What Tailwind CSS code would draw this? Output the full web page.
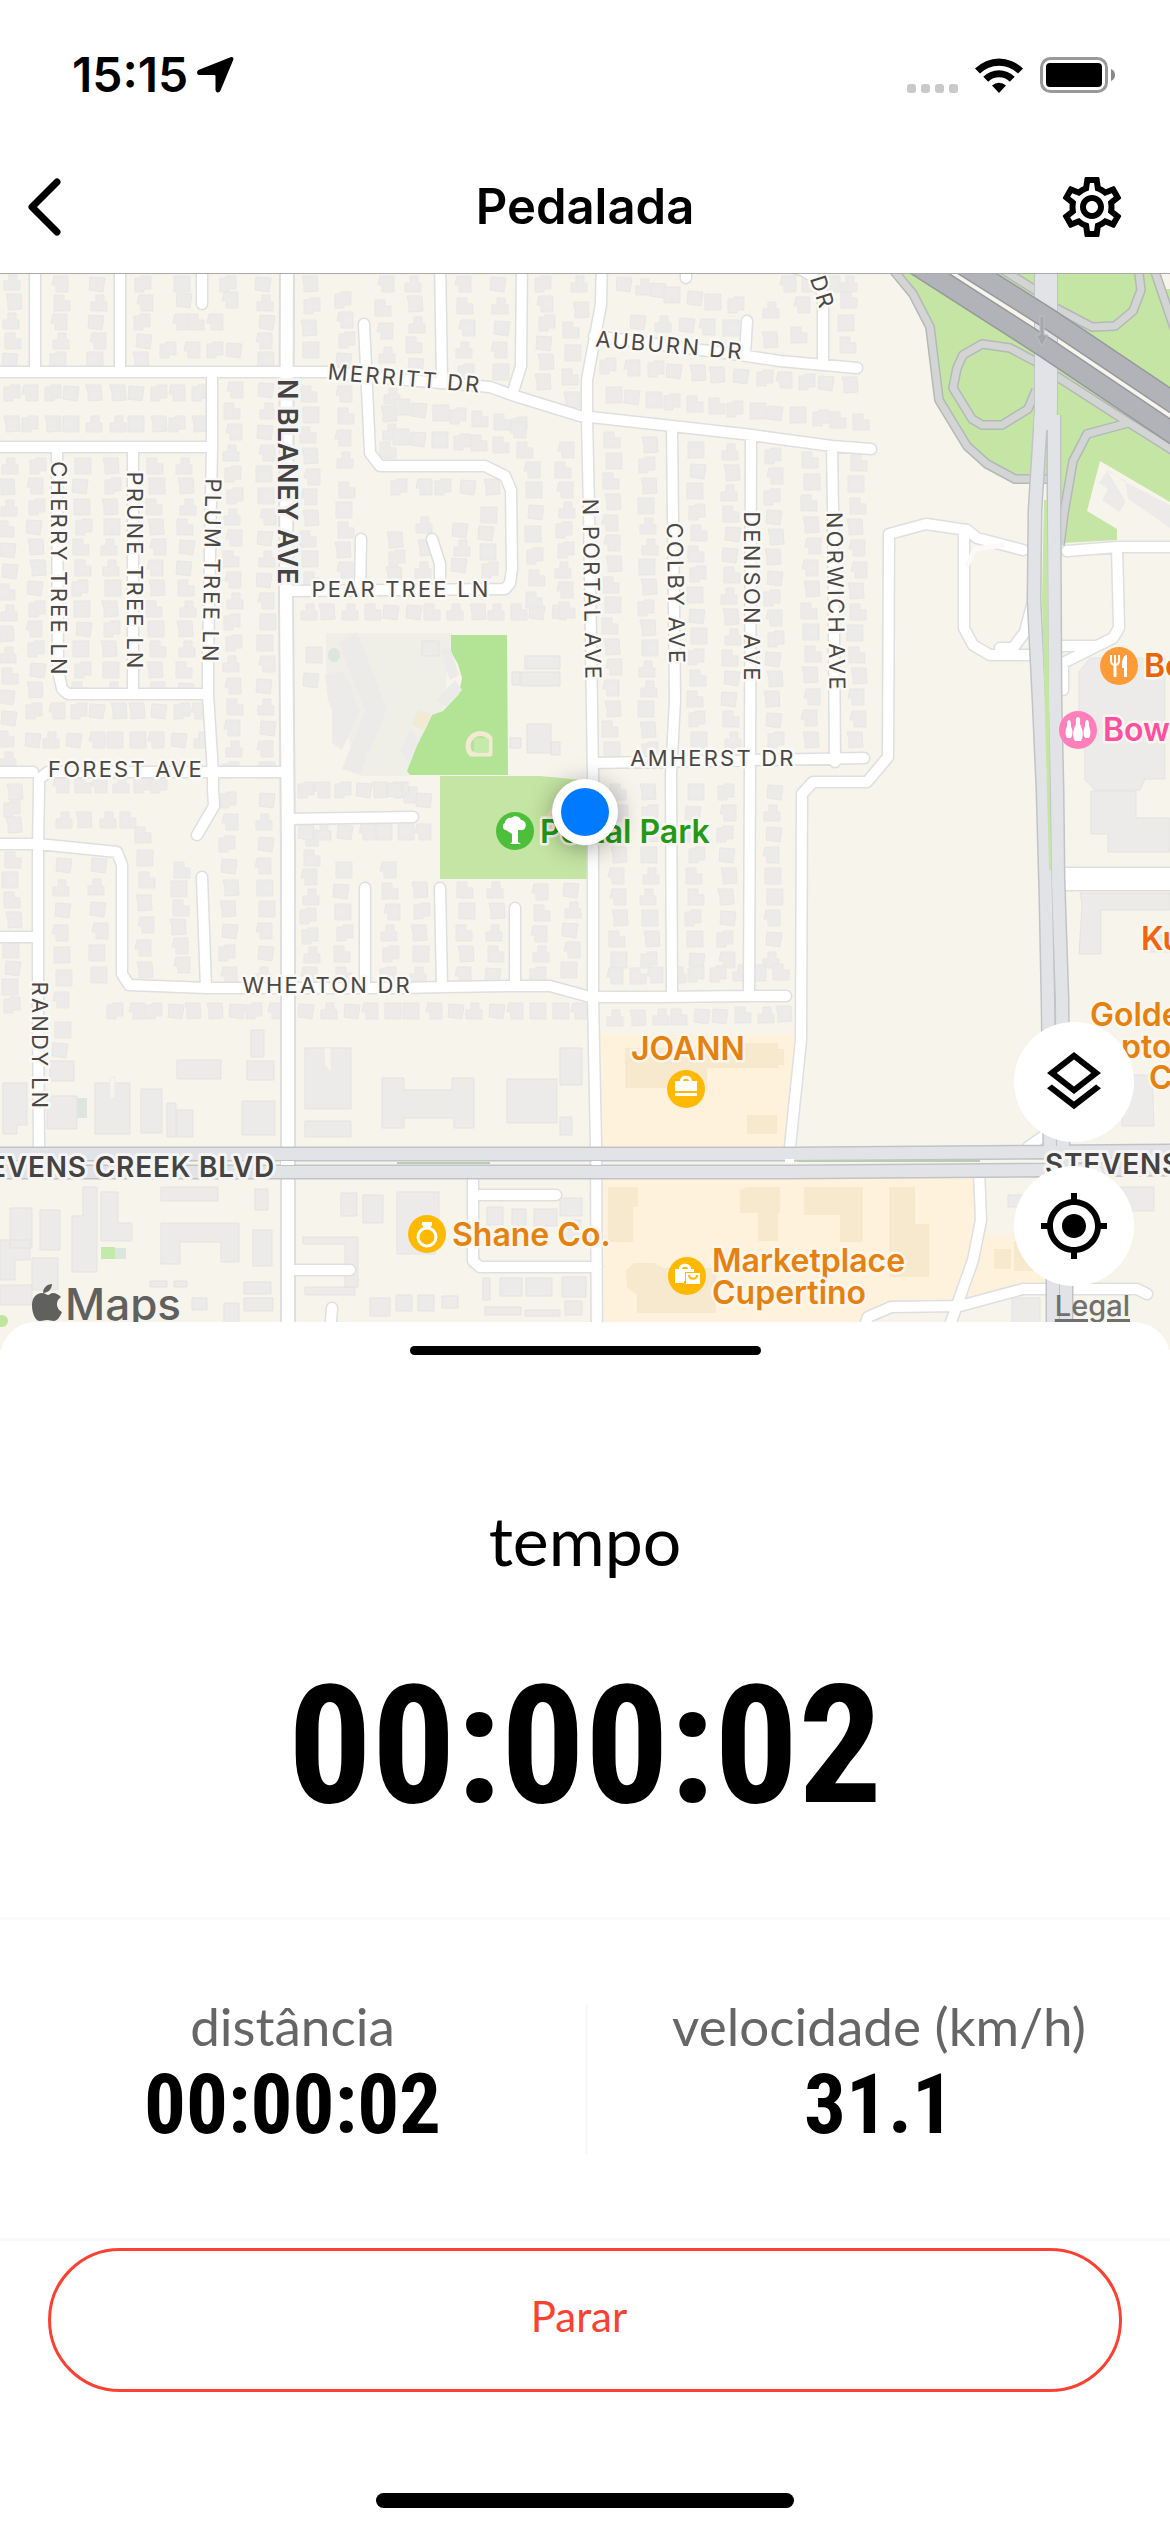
<!DOCTYPE html>
<html lang="pt-BR">
<head>
<meta charset="utf-8">
<meta name="viewport" content="width=device-width, initial-scale=1">
<title>Pedalada</title>
<script src="https://cdn.jsdelivr.net/npm/@tailwindcss/browser@4"></script>
</head>
<body class="min-h-screen flex flex-col bg-white text-black font-['Inter',sans-serif]">

<!-- Status bar -->
<div class="h-[141px] shrink-0 flex items-center justify-between pl-[72px] pr-[54px] pt-2">
  <div class="flex items-center gap-2">
    <span class="text-[48px] leading-[60px] font-semibold">15:15</span>
    <svg class="w-[38px] h-[38px]" viewBox="0 0 38 38" aria-hidden="true"><path d="M34.500 1.200c2-.9 3.500.5 2.800 2.500L24.500 34.500c-1.200 3-5 2.500-5-1V20.200a1.200 1.200 0 0 0-1.200-1.200H4c-3.500 0-4-4-1-5.300z"/></svg>
  </div>
  <div class="flex items-center gap-4">
    <div class="flex items-end gap-[5px] h-9">
      <i class="size-[9px] rounded-[3px] bg-[#c9c9c9]"></i><i class="size-[9px] rounded-[3px] bg-[#c9c9c9]"></i><i class="size-[9px] rounded-[3px] bg-[#c9c9c9]"></i><i class="size-[9px] rounded-[3px] bg-[#c9c9c9]"></i>
    </div>
    <svg class="w-[50px] h-9" viewBox="0 0 50 36" aria-hidden="true"><path d="M1 11.500a34 34 0 0 1 48 0L44 16.500a27 27 0 0 0-38 0zM9.300 19.800a22.200 22.200 0 0 1 31.400 0L35.800 24.700a15.300 15.300 0 0 0-21.600 0zM18 28.500a10 10 0 0 1 14 0L25 36z"/></svg>
    <svg class="w-[76px] h-9" viewBox="0 0 76 36" aria-hidden="true"><rect x="1.500" y="1.500" width="65" height="33" rx="9" fill="none" stroke="#999" stroke-width="3"/><rect x="6" y="6" width="56" height="24" rx="4"/><path fill="#888" d="M71 12v12c2.500-1 4-3.300 4-6s-1.500-5-4-6z"/></svg>
  </div>
</div>

<!-- Navigation header -->
<header class="h-[132px] shrink-0 grid grid-cols-[120px_1fr_120px] items-center">
  <button class="pl-6 justify-self-start" aria-label="Voltar">
    <svg class="w-10 h-[60px]" viewBox="0 0 40 60" fill="none" stroke="#000" stroke-width="7" stroke-linecap="round" stroke-linejoin="round"><path d="M33 5 8 30l25 25"/></svg>
  </button>
  <h1 class="text-center text-[49px] leading-[60px] font-semibold">Pedalada</h1>
  <button class="pr-[42px] justify-self-end" aria-label="Configurações">
    <svg class="size-[72px]" viewBox="0 0 24 24"><path d="M19.430 12.980c.04-.32.07-.64.07-.98 0-.34-.03-.66-.07-.98l2.110-1.650c.19-.15.24-.42.12-.64l-2-3.460c-.09-.16-.26-.25-.44-.25-.06 0-.12.01-.17.03l-2.490 1c-.52-.4-1.080-.73-1.690-.98l-.38-2.650C14.460 2.180 14.250 2 14 2h-4c-.25 0-.46.18-.49.42l-.38 2.650c-.61.25-1.170.59-1.690.98l-2.490-1c-.06-.02-.12-.03-.18-.03-.17 0-.34.09-.43.25l-2 3.460c-.13.22-.07.49.12.64l2.110 1.650c-.04.32-.07.65-.07.98 0 .33.03.66.07.98l-2.110 1.650c-.19.15-.24.42-.12.64l2 3.460c.09.16.26.25.44.25.06 0 .12-.01.17-.03l2.490-1c.52.4 1.080.73 1.690.98l.38 2.650c.03.24.24.42.49.42h4c.25 0 .46-.18.49-.42l.38-2.650c.61-.25 1.170-.59 1.690-.98l2.490 1c.06.02.12.03.18.03.17 0 .34-.09.43-.25l2-3.460c.12-.22.07-.49-.12-.64l-2.110-1.650zm-1.980-1.710c.04.31.05.52.05.73 0 .21-.02.43-.05.73l-.14 1.130.89.7 1.080.84-.7 1.210-1.270-.51-1.040-.42-.9.68c-.43.32-.84.56-1.250.73l-1.060.43-.16 1.130-.2 1.350h-1.400l-.19-1.350-.16-1.130-1.060-.43c-.43-.18-.83-.41-1.230-.71l-.91-.7-1.060.43-1.270.51-.7-1.210 1.080-.84.89-.7-.14-1.130c-.03-.31-.05-.54-.05-.74s.02-.43.05-.73l.14-1.130-.89-.7-1.080-.84.7-1.210 1.270.51 1.040.42.9-.68c.43-.32.84-.56 1.250-.73l1.060-.43.16-1.130.2-1.350h1.390l.19 1.350.16 1.130 1.060.43c.43.18.83.41 1.230.71l.91.7 1.060-.43 1.270-.51.7 1.210-1.070.85-.89.7.14 1.130zM12 8c-2.210 0-4 1.790-4 4s1.790 4 4 4 4-1.790 4-4-1.790-4-4-4zm0 6c-1.100 0-2-.9-2-2s.9-2 2-2 2 .9 2 2-.9 2-2 2z"/></svg>
  </button>
</header>

<!-- Map -->
<section class="relative bg-[#f7f4ec] border-t border-[#a9a9ac]" aria-label="Mapa">
  <svg class="block w-full h-auto" viewBox="0 274 1170 1076" fill="none" stroke-linejoin="round">
    <defs>
      <path id="local" d="M35 260V372M120 260V372M202 260V304M0 372H330Q400 380 455 384L490 387 512 395 580 416 590 417 672 426 752 435 780 439 832 446 871 449M0 447H212M212 372V447L208 659V695L213 772V790L214 806 197 835M57 447 58 670 62 689 68 694H208M133 447V694M0 772H33M287 772H48L39 779V790L38 845V1000L39 1147M0 844H38L117 852 122 865V974L129 985 207 988H400L445 987 515 986H550L590 997H660L750 996H786M0 937H38M202 877 206 988M287 819 413 817M365 888V988M440 888 442 987M515 908V986M602 260 601 304 587 380V417L589 510 592 709 593 778V997L596 1145 597 1360M364 324 370 453 380 466H485L505 476 511 490 512 569 510 583 505 589 287 591M361 539 360 591M432 539 440 564V591M440 260 442 380M522 260 521 366 512 395M594 336 747 356 780 361 857 368M747 321 745 355M686 260V278M795 268Q822 275 823 300V365M672 426 673 520 675 700 671 775 672 996M751 435 750 762 749 996M832 446 833 510 835 762M593 763 864 758M790 1147 801 1040 802 794 813 782H867L888 757 889 534 926 524 967 530 977 538 1023 550M964 530V628L973 645 990 655H1028M1000 648H1013L1025 632 1032 605M1067 551 1117 547H1170M1117 547 1119 628 1113 638 1063 663V690M1062 646H1095M287 1270H350M332 1308 328 1360M473 1172V1261L480 1267H597M473 1195H556M979 1170 981 1220 973 1260 950 1325 945 1360M860 1340 868 1317 891 1307 960 1306 1023 1289H1137L1147 1294M1028 1147 1048 1133"/>
      <path id="ramps" d="M890 266 913 294 930 327 939 400 967 446 987 464 1015 479H1055M1040 364 1010 348 982 344 963 355 957 368 953 388 972 419 982 425H1002L1028 409 1036 390M1050 305 1092 327 1115 326 1133 311 1141 290 1138 266M1153 266 1180 345M1050 372 1123 419 1180 455M1128 423 1087 434 1073 461 1064 513 1060 545M1000 268 1040 293"/>
      <path id="artery" d="M1041 415 1035 510 1034 600 1039 700 1043 790 1046 900 1048 1000 1050 1150M1054 415V510L1055 700 1057 790 1058 880 1062 1000 1063 1150M1053 1150V1360M1066 1150V1360M0 1154H790L1170 1151M0 1172H790L1170 1169"/>
      <path id="freeway" d="M915 264 1046 348 1180 438M962 264 1046 317 1180 407"/>
    </defs>

    <!-- Land use -->
    <path fill="#c4e5a3" d="M890 273 913 294 927 327 938 400 967 446 987 464 1015 480H1060L1062 543 1117 540V529L1087 511 1100 461 1170 502V289H1165L1155 270Z"/>
    <path fill="#efefe8" d="M326 633H452L440 735 408 776H360L326 668Z"/>
    <path fill="#c4e5a3" d="M440 776H540Q575 779 592 782L587 879H440Z"/>
    <path fill="#b3e495" d="M451 635H507L508 775H410L407 771 418 743 425 730 432 715 443 711 459 694 462 678 458 664 451 652Z"/>
    <path stroke="#f3ead4" stroke-width="5" d="M471 754A12 12 0 0 1 490 738V754Z"/><rect x="474" y="738" width="15" height="15" rx="3" fill="#c4ebac"/>
    <path fill="#f3ead4" d="m418 710 13 4-6 16-13-5z"/><circle cx="560" cy="820" r="14" fill="#f0dfc0"/>
    <path fill="#fff2dc" d="M600 1034H793L792 1150H600ZM602 1175H977L981 1233 1047 1238V1288L1020 1290 960 1305H891L868 1317V1350H602Z"/>
    <ellipse cx="334" cy="655" rx="6" ry="7" fill="#dce5de"/><path fill="#dce5de" d="M77 1098h10v20h-10zM115 1248h11v11h-11z"/><path fill="#c4eaa9" d="M101 1247h14v12h-14z"/><circle cx="2" cy="1321" r="6" fill="#bfe5a0"/>

    <!-- Buildings -->
    <g fill="#edebea" stroke="#e5e3e1" stroke-width="1">
      <path stroke="none" d="M357 632 387 709 360 775 342 769 365 711 338 643ZM342 671 353 688 352 693 360 711 342 750 332 743V710L328 701 325 674ZM440 650 450 647 459 675 450 680ZM455 680 462 690 446 707 436 700ZM410 730 420 740 408 762 400 752ZM1108 472 1125 480 1128 499 1170 528V505L1125 482 1108 470 1099 483 1108 489 1102 500 1119 512 1126 502"/>
      <path d="M1079 672 1090 658H1165V779H1145L1140 790H1095L1085 780V750L1079 745ZM1091 791h45v27h34v34h-62v-18h-17zM1080 893H1170V910H1101V954H1079L1082 904ZM1144 935h30v17h-30zM1122 1075h30l2 51h-32zM1120 1187h34v24h-34zM1008 1195h30v12h-30zM1012 1298h28v26h-28z"/>
      <path d="M422 641h17v15h-17zM525 656h35v13h-35zM512 672h8v13h-8zM521 672h39v14h-39zM510 738h11v10h-11zM527 724h24v29h-24zM551 742h9v13h-9zM177 1060h44v19h-44zM247 1061h27v19h-27zM251 1030h13v27h-13zM3 1083h24v42h-10v9H3zM50 1061h24v20h-24zM47 1096h30v33h-30zM95 1083h35v51H95zM141 1089h21v44h-21zM167 1103h9v34h-9zM177 1110h16v27h-16zM242 1101h33v34h-33zM305 1048h46v61h-46zM305 1121h46v16h-46zM382 1078h22v12h48v-12h22v50h-20v-10h-50v10h-22zM507 1079h50v44h-50zM560 1048h22v37h-22zM560 1117h12v18h-12z"/>
      <path d="M161 1187h57v14h-57zM255 1189h13v21h-13zM83 1187h14v85H72v-56h11zM101 1192h17v31h14v18h-31zM161 1223h78v39h-18v-20h-41v22h-19zM253 1230h19v36h-19zM341 1193h16v23h-16zM363 1195h20v28h-20zM397 1192h42v30l-4 32h-38zM10 1208h22v40H10zM40 1210h20v40H40zM0 1240h30v20H15v20H0zM32 1258h26v32H32zM303 1237h55v50h-13v-43h-42zM0 1285h32v20H0zM150 1281h17v6h-17zM174 1281h13v6h-13zM244 1282h27v12h-27zM244 1298h29v13h-29zM192 1298h15v12h-15zM224 1303h15v20h-15zM305 1287h50v8h-50zM370 1298h20v18h-20z"/>
      <path d="M487 1207h16v18h-16zM512 1209h14v17h-14zM534 1209h23v17h-23zM560 1198h22v18h-22zM565 1220h16v20h-16zM483 1278h7v22h-7zM500 1278h22v18h-22zM526 1278h26v18h-26zM562 1277h24v20h-24zM485 1307h36v8h-36zM525 1310h35v6h-35zM565 1301h17v14h-17zM396 1295h16v16h-16zM418 1295h16v16h-16zM442 1296h16v12h-16z"/>
    </g>
    <path fill="#f7e9cd" d="M625 1048h120v-5h33v6h6v16h-6v3h-71v20h-82zM747 1115h30v19h-30zM608 1187h30v20h-5v35h-25zM740 1190l8-3h32v26h-2v28h-20v-28h-18zM626 1270l8-7h20l10 5h52v45h-79v-18l-10-8zM804 1187h59v55h-23v-27h-36zM889 1187h26v37h14v53h-40zM994 1249h17v20h-17zM1014 1241h33v30h-33z"/>
    <path stroke="#edebea" fill="#f7f4ec" stroke-width="1" d="M110 1077h5v21h-5zM324 1048h7v25l-6-8z"/>
    <g id="houses" fill="#edebea" stroke="#e9e7e5" stroke-width="1"></g>

    <!-- Roads -->
    <use href="#local" stroke="#dddfe0" stroke-width="13" stroke-linecap="round"/>
    <path stroke="#dddfe0" stroke-width="16" d="M287 260 286 600 288 850V1360"/>
    <path stroke="#dddfe0" stroke-width="25" d="M1060 879H1180"/>
    <use href="#local" stroke="#fff" stroke-width="10" stroke-linecap="round"/>
    <path stroke="#fff" stroke-width="12" d="M287 260 286 600 288 850V1360"/>
    <path stroke="#fff" stroke-width="22" d="M1060 879H1180"/>
    <path stroke="#fbfaf8" stroke-width="5" d="M966 567 975 549 1004 545"/>
    <use href="#ramps" stroke="#b5b8b8" stroke-width="10"/>
    <use href="#ramps" stroke="#d2d5d4" stroke-width="7"/>
    <path stroke="#f7f4ec" stroke-width="36" d="M938 264 1046 333 1180 423"/>
    <use href="#artery" stroke="#c1c3c7" stroke-width="15"/>
    <path stroke="#e2e3e7" stroke-width="22" d="M1046 260V400L1045 430"/>
    <use href="#artery" stroke="#e2e3e7" stroke-width="12"/>
    <path stroke="#c1c3c7" d="M1034.500 273V415M1057.500 273V415"/>
    <use href="#freeway" stroke="#97989d" stroke-width="22"/>
    <use href="#freeway" stroke="#b2b3b9" stroke-width="19"/>
    <path fill="#c4e5a3" d="M1044 500 1047 500 1050 790 1051 870 1049 870 1042 600Z"/>
    <path stroke="#b7ccb0" stroke-width="2" d="M70 1163H78M397 1163H490M797 1161H980"/>
    <path stroke="#fff" stroke-width="4" d="M281 1163H294M592 1163H601M785 1161H794"/>
    <path fill="#a5a6a9" stroke="#bfc0c4" stroke-width="1" d="M1040 316h4v19h4l-6 11-6-11h4z"/>

    <!-- Street names -->
    <g class="text-[22px] tracking-widest" fill="#4a4846" stroke="#fbf9f5" stroke-width="5" paint-order="stroke" text-anchor="middle">
      <text transform="translate(51 569) rotate(90)">CHERRY TREE LN</text>
      <text transform="translate(127 571) rotate(90)">PRUNE TREE LN</text>
      <text transform="translate(204 571) rotate(91)">PLUM TREE LN</text>
      <text transform="translate(32 1046) rotate(90)">RANDY LN</text>
      <text transform="translate(584 590) rotate(89)">N PORTAL AVE</text>
      <text transform="translate(668 594) rotate(89)">COLBY AVE</text>
      <text transform="translate(744 597) rotate(90)">DENISON AVE</text>
      <text transform="translate(828 602) rotate(89)">NORWICH AVE</text>
      <text transform="translate(404 386) rotate(5)">MERRITT DR</text>
      <text transform="translate(669 353) rotate(5)">AUBURN DR</text>
      <text transform="translate(815 295) rotate(72)">DR</text>
      <text x="401" y="597">PEAR TREE LN</text>
      <text x="126" y="777">FOREST AVE</text>
      <text x="713" y="766">AMHERST DR</text>
      <text x="327" y="993">WHEATON DR</text>
    </g>
    <g class="tracking-wider font-semibold" fill="#454341" stroke="#f4f4f4" stroke-width="6" paint-order="stroke">
      <text class="text-[27px]" text-anchor="middle" transform="translate(278 482) rotate(90)">N BLANEY AVE</text>
      <text class="text-[28px]" text-anchor="end" x="275" y="1177">STEVENS CREEK BLVD</text>
      <text class="text-[28px]" x="1045" y="1174">STEVENS</text>
    </g>

    <!-- Places -->
    <g class="text-[32px] font-semibold" fill="#e5820f" stroke="#fbf6ee" stroke-width="5" paint-order="stroke">
      <text x="540" y="843" fill="#239a17">Portal Park</text>
      <text x="631" y="1060">JOANN</text>
      <text x="452" y="1246">Shane Co.</text>
      <text x="712" y="1272">Marketplace</text>
      <text x="712" y="1304">Cupertino</text>
      <text x="1144" y="677" fill="#e8650f">Bo</text>
      <text x="1103" y="741" fill="#ff4fa0">Bow</text>
      <text x="1141" y="950" fill="#f2640f">Ku</text>
      <text x="1090" y="1026">Golde</text>
      <text x="1121" y="1058">pto</text>
      <text x="1149" y="1089">C</text>
    </g>
    <circle cx="515" cy="831" r="19" fill="#4dbf3a"/><path fill="#fff" d="M512 842v-8l-6-4c-4 0-4-6-1-7 0-4 4-6 6-5 3-3 9-2 10 2 4 0 6 5 4 8-1 3-5 2-7 2v12l3 2h-11z"/>
    <circle cx="686" cy="1089" r="19" fill="#ffb900"/><path fill="#fff" d="M675 1081h5c0-7 12-7 12 0h5v10h-22zm8 0h6c0-3-6-3-6 0zM675 1093h22v3h-22z"/>
    <circle cx="427" cy="1234" r="19" fill="#ffb900"/><circle cx="427" cy="1237" r="9" stroke="#fff" stroke-width="3"/><path fill="#fff" d="M422 1222h10v3l-3 4h-4l-3-4z"/>
    <circle cx="687" cy="1276" r="19" fill="#ffb900"/><path fill="#fff" d="M675 1269h4c0-7 12-7 12 0h3v3h-9v9h-10zm7 0h6c0-3-6-3-6 0zM675 1281h9v2h-9zM686 1273h14v11h-14z"/><path stroke="#ffb900" stroke-width="2" d="M689 1275c0 5 8 5 8 0"/>
    <circle cx="1119" cy="666" r="19" fill="#ff9a38"/><path stroke="#fff" stroke-width="2" d="M1111 655v6c0 5 8 5 8 0v-6M1115 655v22"/><path stroke="#fff" stroke-width="3" d="M1115 664v13"/><path fill="#fff" d="M1127 655v22h-3v-9h-2c0-8 1-13 5-13z"/>
    <circle cx="1078" cy="730" r="19" fill="#ff7fbb"/><path fill="#fff" d="M1078 717c3 0 2 4 2 7 3 6 4 12 1 17h-6c-3-5-2-11 1-17 0-3-1-7 2-7zM1069 720c2 0 2 4 2 6 2 5 2 9 0 12h-4c-2-3-2-7 0-12 0-2 0-6 2-6zM1087 720c2 0 2 4 2 6 2 5 2 9 0 12h-4c-2-3-2-7 0-12 0-2 0-6 2-6z"/>

    <!-- Current position -->
    <g class="drop-shadow-[0_4px_12px_rgba(0,0,0,0.35)]"><circle cx="585" cy="812" r="33" fill="#fff"/></g>
    <circle cx="585" cy="812" r="24" fill="#007aff"/>

    <!-- Provider mark -->
    <g fill="#60605e">
      <path d="M52 1284c0 5-4 9-9 9 0-5 4-9 9-9zM53 1293c3 0 6 2 8 4-6 4-5 12 1 15-2 5-5 9-8 9-3 0-4-1-7-1s-4 1-7 1c-5 0-8-8-8-16s5-12 10-12c3 0 5 2 6 2s3-2 5-2z"/>
      <text class="text-[44px] font-medium" x="65" y="1320">Maps</text>
    </g>
  </svg>

  <!-- Map controls -->
  <div class="absolute right-9 bottom-16 flex flex-col gap-6">
    <button class="size-[120px] rounded-full bg-white grid place-items-center" aria-label="Camadas">
      <svg class="size-[72px]" viewBox="0 0 24 24"><path d="M11.990 18.540l-7.370-5.730L3 14.070l9 7 9-7-1.630-1.270zM12 16l7.360-5.730L21 9l-9-7-9 7 1.630 1.270L12 16zm0-11.470L17.740 9 12 13.470 6.260 9 12 4.530z"/></svg>
    </button>
    <button class="size-[120px] rounded-full bg-white grid place-items-center" aria-label="Minha localização">
      <svg class="size-[72px]" viewBox="0 0 24 24"><path d="M12 8c-2.210 0-4 1.790-4 4s1.790 4 4 4 4-1.790 4-4-1.790-4-4-4zm8.940 3c-.46-4.170-3.770-7.480-7.940-7.940V1h-2v2.060C6.830 3.520 3.520 6.830 3.060 11H1v2h2.060c.46 4.170 3.770 7.480 7.940 7.940V23h2v-2.060c4.170-.46 7.480-3.770 7.940-7.940H23v-2h-2.060zM12 19c-3.870 0-7-3.130-7-7s3.130-7 7-7 7 3.130 7 7-3.130 7-7 7z"/></svg>
    </button>
  </div>
  <a href="#legal" class="absolute right-10 bottom-7 text-[29px] leading-8 font-medium text-[#70706e] underline decoration-[3px] underline-offset-3">Legal</a>
</section>

<!-- Ride panel -->
<main class="relative -mt-7 grow flex flex-col rounded-t-[36px] bg-white font-['Lato',sans-serif]">
  <div class="mt-6 mx-auto w-[30%] h-[9px] rounded-full bg-black"></div>

  <section class="pt-[145px] h-[562px] text-center">
    <h2 class="text-[68px] leading-[80px]">tempo</h2>
    <p class="mt-[66px] font-['Roboto_Condensed','Roboto',sans-serif] text-[166px] leading-[200px] font-bold">00:00:02</p>
  </section>

  <dl class="grid grid-cols-2 py-[84px] border-y-3 border-[#f9f9f9] text-center">
    <div class="flex flex-col h-[150px]">
      <dt class="-mt-2 text-[53px] leading-[60px] text-[#666]">distância</dt>
      <dd class="mt-1 font-['Roboto_Condensed','Roboto',sans-serif] text-[83px] leading-[90px] font-bold">00:00:02</dd>
    </div>
    <div class="flex flex-col h-[150px] border-l-3 border-[#f9f9f9]">
      <dt class="-mt-2 text-[53px] leading-[60px] text-[#666]">velocidade (km/h)</dt>
      <dd class="mt-1 font-['Roboto_Condensed','Roboto',sans-serif] text-[83px] leading-[90px] font-bold">31.1</dd>
    </div>
  </dl>

  <div class="px-12 pt-[7px]">
    <button class="w-full h-[144px] rounded-full border-3 border-[#fb4132] text-[#fb4132] text-[42px] leading-[48px] pr-3 pb-2">Parar</button>
  </div>
  <div class="mt-auto mb-6 mx-auto w-[418px] h-[15px] rounded-full bg-black"></div>
</main>

<script>
  // Residential blocks: each entry is a line of houses [x1, y1, x2, y2].
  const lines = [
    [12,282,12,360],[60,284,60,360],[97,284,97,360],[143,284,143,360],[182,284,182,300],[229,284,229,300],[265,284,265,360],[170,350,235,350],[180,322,215,322],
    [10,393,200,393],[10,424,200,424],
    [8,466,8,760],[36,466,36,690],[82,466,82,690],[111,466,111,690],[156,466,156,690],[186,466,186,690],[233,390,233,770],[266,390,266,770],
    [36,711,200,711],[32,740,200,740],[62,785,160,785],[14,792,14,825],[62,820,130,820],
    [310,284,310,350],[345,300,345,360],[385,284,385,355],[310,394,310,580],[345,394,345,460],[345,490,345,570],[390,396,390,450],[395,540,395,575],
    [308,612,560,612],[312,655,312,680],[305,790,400,790],
    [415,284,415,365],[465,284,465,372],[500,284,500,372],[545,284,545,382],[579,284,579,310],[572,330,572,400],
    [400,407,520,425],[400,437,500,445],[520,430,530,470],[400,487,490,487],[535,490,535,600],[565,450,565,610],[425,525,425,570],[460,530,460,565],[488,515,488,570],
    [625,284,660,290],[672,295,735,305],[640,322,730,328],[610,366,850,385],[612,395,860,422],[790,284,850,284],[848,300,848,345],[800,305,800,335],[770,310,772,340],
    [612,440,612,750],[648,445,648,750],[697,450,697,740],[731,452,731,740],[774,456,774,740],[811,460,811,740],[857,463,857,740],
    [618,792,618,960],[650,792,650,960],[695,792,695,960],[727,792,727,960],[773,792,773,960],[615,976,780,972],[617,1018,785,1014],
    [12,860,12,920],[12,950,12,1005],[62,865,62,1000],[98,865,98,975],[145,835,145,970],[180,870,180,965],[229,800,229,975],[265,800,265,975],
    [310,838,310,975],[343,870,343,975],[390,870,390,975],[420,890,420,975],[465,890,465,975],[495,890,495,975],[540,892,540,975],[571,890,571,970],
    [115,1011,275,1011],[308,1011,580,1011],[305,832,425,832],[395,790,425,800],[62,1030,62,1050]
  ];
  // House footprints, centred on the origin.
  const shapes = ["M-8-8H8V8H-8Z","M-8-8H2V-2H8V8H-8Z","M-6-8H8V8H-4V1H-8Z","M-8-6H-2V-8H8V5H1V8H-8Z","M-8-8H7L8 7-6 8V0Z","M-3-8H5V-1H8V8H-8V-1H-3Z","M-7-7 8-6 6 8-8 6Z"];
  const houses = document.getElementById("houses");
  let n = 0, out = "";
  for (const [x1, y1, x2, y2] of lines) {
    const steps = Math.max(1, Math.round(Math.hypot(x2 - x1, y2 - y1) / 21));
    for (let i = 0; i <= steps; i++) {
      n++;
      const x = Math.round(x1 + (x2 - x1) * i / steps) + (n * 7 % 5) - 2;
      const y = Math.round(y1 + (y2 - y1) * i / steps);
      out += `<path transform="translate(${x} ${y})" d="${shapes[(n * 5 + i * i) % shapes.length]}"/>`;
    }
  }
  houses.innerHTML = out;
</script>
</body>
</html>
